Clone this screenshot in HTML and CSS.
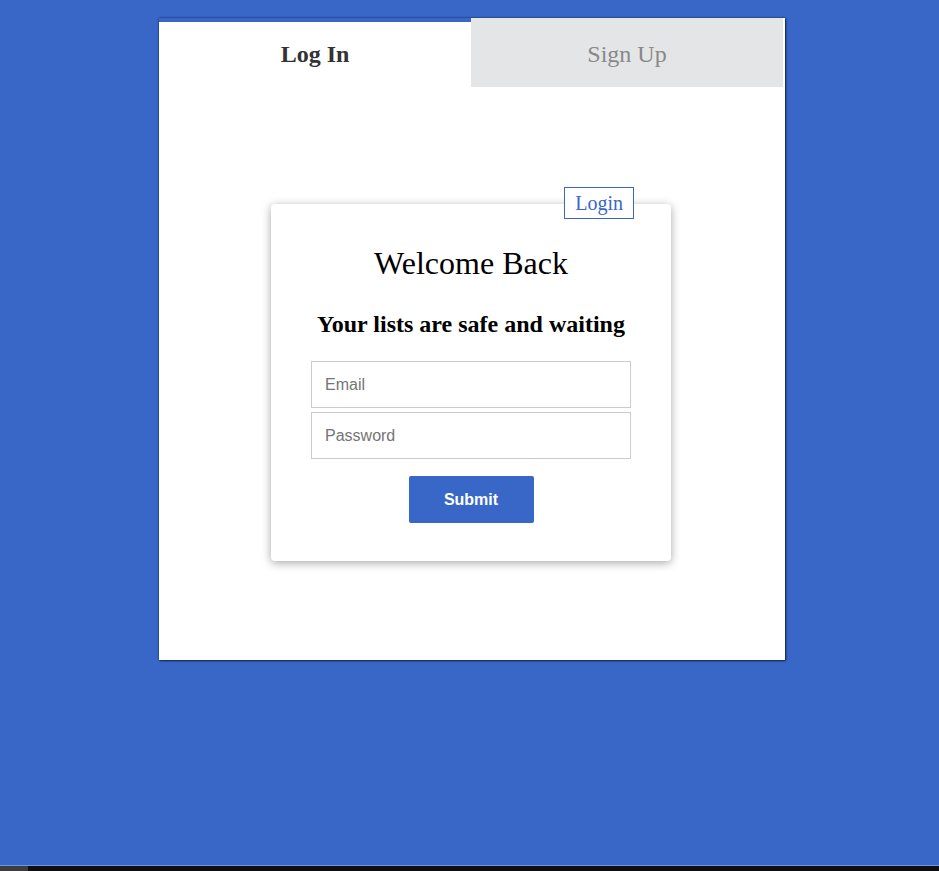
FILE: index.html
```html
<!DOCTYPE html>
<html lang="en">
<head>
<meta charset="utf-8">
<title>Log In</title>
<link rel="stylesheet" href="styles.css">
</head>
<body>
<div class="page">
  <div class="panel">
    <div class="tabs">
      <div class="tab tab-active">Log In</div>
      <div class="tab tab-inactive">Sign Up</div>
    </div>
    <div class="content">
      <form class="card">
        <span class="tag">Login</span>
        <h1 class="title">Welcome Back</h1>
        <h2 class="subtitle">Your lists are safe and waiting</h2>
        <div class="fields">
          <input class="field" type="email" placeholder="Email">
          <input class="field" type="password" placeholder="Password">
        </div>
        <button class="submit" type="button">Submit</button>
      </form>
    </div>
  </div>
</div>
<div class="taskbar"><span class="taskbar-start"></span></div>
</body>
</html>
```
FILE: styles.css
```css
html, body {
  margin: 0;
  padding: 0;
}
body {
  background: #3867c8;
  min-height: 100vh;
  display: flex;
  flex-direction: column;
  font-family: "Liberation Serif", "Times New Roman", serif;
}
.page {
  flex: 1;
  padding: 18px 0 0 159px;
}
.panel {
  width: 626px;
  background: #fff;
  box-shadow: 1px 1px 2px rgba(0, 0, 0, 0.55), 0 0 2px rgba(0, 0, 0, 0.6);
}
.tabs {
  display: grid;
  grid-template-columns: 312px 312px;
}
.tab {
  height: 69px;
  box-sizing: border-box;
  display: flex;
  align-items: center;
  justify-content: center;
  font-size: 24px;
}
.tab-active {
  border-top: 4px solid #3867c8;
  color: #333;
  font-weight: bold;
  padding-bottom: 1px;
}
.tab-inactive {
  background: #e4e5e7;
  color: #888;
  padding-top: 4px;
}
.content {
  display: flex;
  justify-content: center;
  padding: 117px 2px 99px 0;
}
.card {
  position: relative;
  width: 400px;
  box-sizing: border-box;
  padding: 41px 40px 38px;
  background: #fff;
  border-radius: 4px;
  box-shadow: 0 2px 10px rgba(0, 0, 0, 0.35);
  display: flex;
  flex-direction: column;
  align-items: center;
  margin: 0;
}
.tag {
  position: absolute;
  top: -17px;
  right: 37px;
  background: #fff;
  border: 1px solid #3867c8;
  color: #3867c8;
  font-size: 20px;
  line-height: 23px;
  padding: 4px 10px 3px 10px;
}
.title {
  margin: 0;
  font-size: 32px;
  font-weight: normal;
  line-height: 37px;
  color: #000;
}
.subtitle {
  margin: 28px 0 0;
  font-size: 24px;
  font-weight: bold;
  line-height: 28px;
  color: #000;
}
.fields {
  margin-top: 23px;
  display: flex;
  flex-direction: column;
  gap: 4px;
  width: 320px;
}
.field {
  box-sizing: border-box;
  width: 320px;
  height: 47px;
  margin: 0;
  border: 1px solid #ccc;
  border-radius: 0;
  padding: 0 13px;
  font-family: "Liberation Sans", Arial, sans-serif;
  font-size: 16px;
  color: #333;
  outline: none;
}
.field::placeholder {
  color: #757575;
}
.submit {
  margin-top: 17px;
  width: 125px;
  height: 47px;
  border: none;
  border-radius: 2px;
  background: #3867c8;
  color: #fff;
  font-family: "Liberation Sans", Arial, sans-serif;
  font-weight: bold;
  font-size: 16px;
  cursor: pointer;
}
.taskbar {
  height: 5px;
  border-top: 1px solid #6f97dc;
  background: #0d0e12;
  display: flex;
}
.taskbar-start {
  width: 28px;
  background: #3d3d3f;
}
```
